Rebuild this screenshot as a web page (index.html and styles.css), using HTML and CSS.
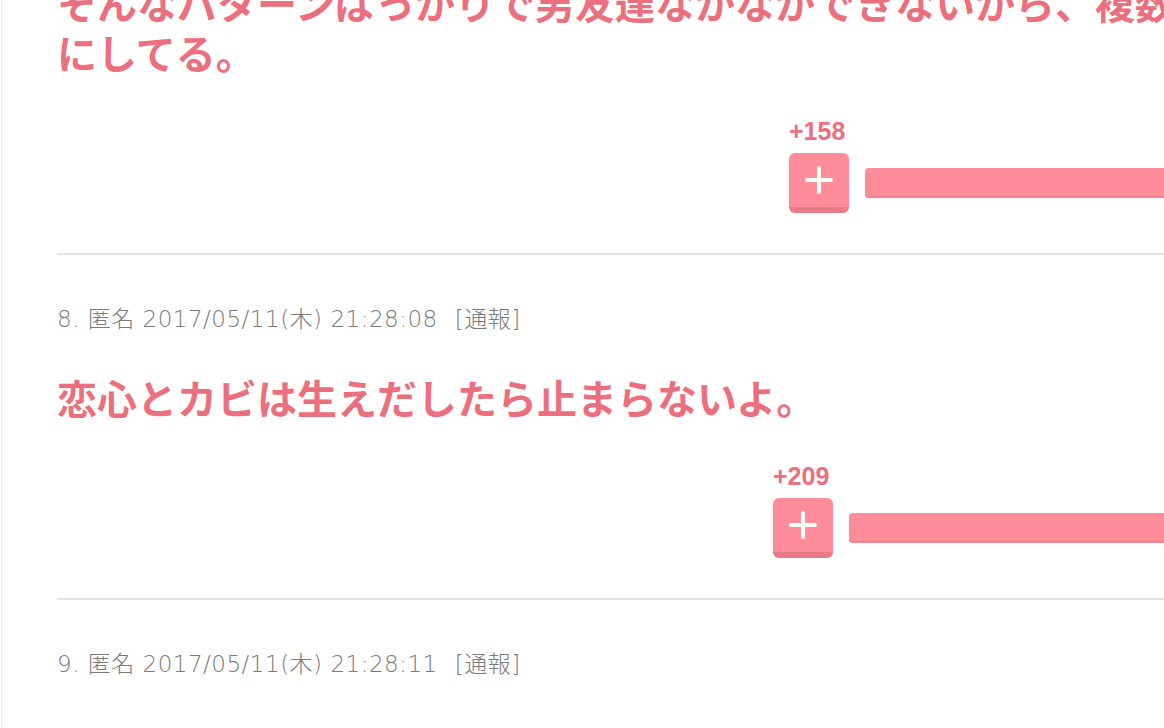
FILE: index.html
```html
<!DOCTYPE html>
<html lang="ja">
<head>
    <meta charset="UTF-8">
    <meta name="viewport" content="width=device-width, initial-scale=1.0">
    <title>コメント</title>
    <link rel="stylesheet" href="styles.css">
</head>
<body>
    <div id="page">
        <div class="comment first">
            <p class="comment-body">そんなパターンばっかりで男友達なかなかできないから、複数人で遊ぶよう<br>にしてる。</p>
            <div class="vote">
                <div class="vote-btn-col">
                    <div class="vote-count">+158</div>
                    <button type="button" class="vote-btn"> <!-- plus button -->
                        <svg width="28" height="28" viewBox="0 0 28 28"><path d="M14 2v24M2 14h24" stroke="#fff" stroke-width="4" stroke-linecap="round"/></svg>
                    </button>
                </div>
                <div class="vote-bar" style="width: 535px"></div>
            </div>
        </div>

        <div class="comment">
            <div class="meta">8. 匿名 2017/05/11(木) 21:28:08<span class="report">[通報]</span></div>
            <p class="comment-body">恋心とカビは生えだしたら止まらないよ。</p>
            <div class="vote">
                <div class="vote-btn-col">
                    <div class="vote-count">+209</div>
                    <button type="button" class="vote-btn">
                        <svg width="28" height="28" viewBox="0 0 28 28"><path d="M14 2v24M2 14h24" stroke="#fff" stroke-width="4" stroke-linecap="round"/></svg>
                    </button>
                </div>
                <div class="vote-bar" style="width: 551px"></div>
            </div>
        </div>

        <div class="comment">
            <div class="meta">9. 匿名 2017/05/11(木) 21:28:11<span class="report">[通報]</span></div>
        </div>
    </div>
</body>
</html>
```
FILE: styles.css
```css
body, html {
    margin: 0;
    background: #fff;
    overflow: hidden;
}
#page {
    width: 1343px;
    margin-top: -23px;
    margin-left: 1px;
    border-left: 1px solid #ececec;
    padding-left: 55px;
    padding-bottom: 200px;
    font-family: "Noto Sans CJK JP", sans-serif;
}

.comment {
    border-bottom: 2px solid #e4e4e4;
}
.comment:last-child {
    border-bottom: none;
}
.comment + .comment {
    padding-top: 48px;
}

.meta {
    font-family: "DejaVu Sans", "Noto Sans CJK JP", sans-serif;
    font-size: 23px;
    line-height: 32px;
    letter-spacing: 0.5px;
    color: #7a7a7a;
    font-weight: 200;
}
.meta .report {
    margin-left: 17px;
}

.comment-body {
    margin: 37px 0 0;
    font-size: 40px;
    line-height: 50px;
    font-weight: bold;
    color: #eb6f7d;
    white-space: nowrap;
}
.first .comment-body {
    margin-top: 0;
}

.vote {
    display: flex;
    justify-content: flex-end;
    align-items: flex-end;
    gap: 16px;
    margin-top: 40px;
    padding-bottom: 40px;
}
.vote-btn-col {
    display: flex;
    flex-direction: column;
    gap: 8px;
}
.vote-count {
    font-family: "Liberation Sans", Arial, sans-serif;
    font-weight: bold;
    font-size: 25px;
    line-height: 28px;
    color: #eb6f7d;
}
.vote-btn {
    width: 60px;
    height: 60px;
    padding: 0;
    border: none;
    border-bottom: 6px solid #e97a88;
    border-radius: 6px;
    background: #ff8d99;
    display: flex;
    align-items: center;
    justify-content: center;
}
.vote-bar {
    height: 30px;
    margin-bottom: 15px;
    background: #ff8d99;
    border-radius: 4px;
    box-shadow: inset 0 -2px 0 #f3818e;
}
```
